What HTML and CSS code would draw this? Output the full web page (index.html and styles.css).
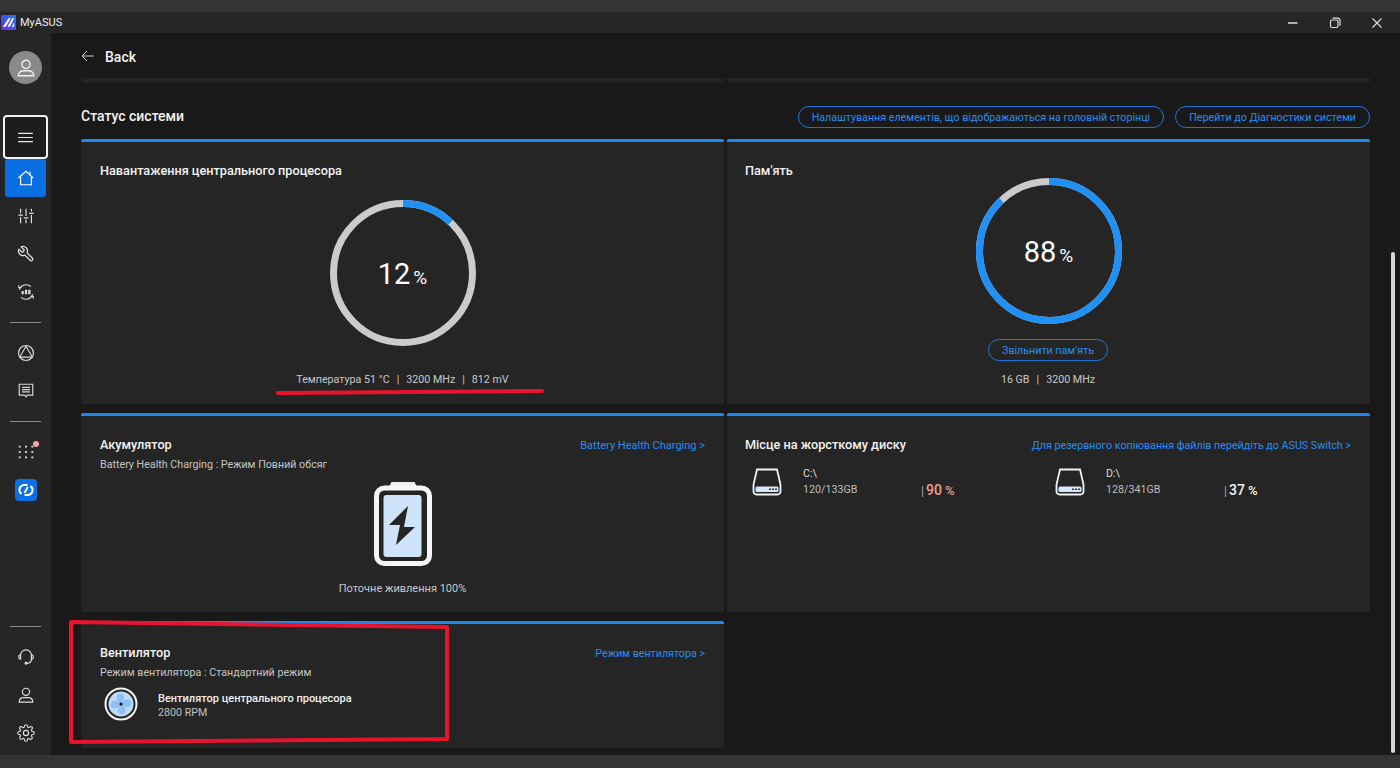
FILE: index.html
```html
<!DOCTYPE html>
<html lang="uk">

<head>
    <meta charset="utf-8">
    <title>MyASUS</title>
    <link rel="stylesheet" href="styles.css">
</head>

<body>
    <div class="strip-top"></div>
    <div class="titlebar">
        <div class="app-name">
            <svg class="app-logo" viewBox="0 0 16 16">
                <defs>
                    <linearGradient id="logo-grad" x1="0" y1="1" x2="1" y2="0">
                        <stop offset="0" stop-color="#6a2be0"/>
                        <stop offset="1" stop-color="#1e7cf0"/>
                    </linearGradient>
                </defs>
                <rect width="16" height="16" rx="1" fill="url(#logo-grad)"/>
                <path d="M2 12.500 8 3.500h2.500l-5.500 9zM7 12.500 12 3.500h2l-4.500 9zM11.500 12.500l2.500-4.500v4.500z" fill="#fff"/>
            </svg>
            MyASUS
        </div>
        <div class="win-btns">
            <svg viewBox="0 0 12 12"><path d="M1 6h9.500" stroke="#ddd" stroke-width="1.500"/></svg>
            <svg viewBox="0 0 12 12" fill="none" stroke="#ddd" stroke-width="1.200"><rect x="1.500" y="3" width="7.500" height="7.500" rx="1.500"/><path d="M3.500 1.200h5a2.500 2.500 0 0 1 2.500 2.500v5"/></svg>
            <svg viewBox="0 0 12 12"><path d="M1.500 1.500l9 9M10.500 1.500l-9 9" stroke="#ddd" stroke-width="1.100"/></svg>
        </div>
    </div>

    <div class="main">
        <div class="sidebar">
            <div class="avatar">
                <svg viewBox="0 0 24 24" fill="none" stroke="#f2f2f2" stroke-width="1.500"><circle cx="12" cy="8" r="4.500"/><path d="M3.500 20.500c0-3.500 3-5.500 5.500-5.500h6c2.500 0 5.500 2 5.500 5.500z"/></svg>
            </div>
            <div class="side-menu">
                <svg viewBox="0 0 16 12" stroke="#e6e6e6" stroke-width="1.300"><path d="M0 1.500h16M0 6h16M0 10.500h16"/></svg>
            </div>
            <div class="side-home">
                <svg viewBox="0 0 20 20" fill="none" stroke="#fff" stroke-width="1.300"><path d="M1.500 10 10 2.500l8 7.500M4 8v9.500h12V8M14.500 3v3"/></svg>
            </div>
            <div class="side-item">
                <svg viewBox="0 0 20 20" fill="none" stroke="#e0e0e0" stroke-width="1.300"><path d="M4 2v5M1.500 9h5M4 11v7M10 2v8M7.500 12h5M10 14v4M16 2v3M13.500 7h5M16 9v9"/></svg>
            </div>
            <div class="side-item">
                <svg viewBox="0 0 24 24" fill="none" stroke="#e0e0e0" stroke-width="1.700" stroke-linejoin="round"><path transform="translate(24 0) scale(-1 1)" d="M14.700 6.300a1 1 0 0 0 0 1.400l1.600 1.600a1 1 0 0 0 1.400 0l3.770-3.770a6 6 0 0 1-7.940 7.940l-6.910 6.910a2.120 2.120 0 0 1-3-3l6.910-6.910a6 6 0 0 1 7.940-7.940l-3.760 3.760z"/></svg>
            </div>
            <div class="side-item">
                <svg viewBox="0 0 20 20" fill="none" stroke="#e0e0e0" stroke-width="1.200"><path d="M2.500 7.500A8 8 0 0 1 15.500 4M17.500 12.500A8 8 0 0 1 4.500 16M2 2.500V5h3M18 17.500V15h-3"/><rect x="5" y="9" width="2.500" height="3.500" fill="#e0e0e0" stroke="none"/><rect x="8.800" y="7.500" width="2.500" height="5" fill="#e0e0e0" stroke="none"/><rect x="12.500" y="7.500" width="2.500" height="5" fill="#e0e0e0" stroke="none"/></svg>
            </div>
            <div class="side-line"></div>
            <div class="side-item">
                <svg viewBox="0 0 20 20" fill="none" stroke="#d8d8d8" stroke-width="1.300"><circle cx="10" cy="10" r="8.300"/><path d="M10 2.500 3 14.500h14z"/></svg>
            </div>
            <div class="side-item">
                <svg viewBox="0 0 20 20" fill="none" stroke="#d8d8d8" stroke-width="1.300"><path d="M2.500 2.500h15v12h-6l-1.500 2-1.500-2h-6z"/><path d="M5.500 6h9M5.500 8.500h9M5.500 11h9"/></svg>
            </div>
            <div class="side-line"></div>
            <div class="side-item side-apps">
                <svg viewBox="0 0 20 20" fill="#e8e8e8"><rect x="2" y="3" width="2" height="2"/><rect x="9" y="3" width="2" height="2"/><rect x="16" y="3" width="2" height="2"/><rect x="2" y="9" width="2" height="2"/><rect x="9" y="9" width="2" height="2"/><rect x="16" y="9" width="2" height="2"/><rect x="2" y="15" width="2" height="2"/><rect x="9" y="15" width="2" height="2"/><rect x="16" y="15" width="2" height="2"/></svg>
                <span class="apps-dot"></span>
            </div>
            <div class="side-item side-switch">
                <svg viewBox="0 0 22 22"><rect width="22" height="22" rx="4" fill="#0b6fe6"/><path d="M12.500 6H9a5 5 0 0 0-2.500 9M9.500 16H13a5 5 0 0 0 2.500-9M12.800 8 9.500 14" fill="none" stroke="#fff" stroke-width="2"/></svg>
            </div>

            <div class="side-bottom">
                <div class="side-line"></div>
                <div class="side-item">
                    <svg viewBox="0 0 20 20" fill="none" stroke="#e0e0e0" stroke-width="1.300"><path d="M4 8a6 6 0 0 1 12 0M4 7.500a2 2 0 0 0-2 2v1a2 2 0 0 0 2 2zM16 7.500a2 2 0 0 1 2 2v1a2 2 0 0 1-2 2zM16 12.500c0 3-2 4.500-5 4.500"/><circle cx="10" cy="17" r="1" fill="#e0e0e0"/></svg>
                </div>
                <div class="side-item">
                    <svg viewBox="0 0 20 20" fill="none" stroke="#e0e0e0" stroke-width="1.300"><circle cx="10" cy="6.500" r="4"/><path d="M2.500 18c0-3.500 2.500-5 5-5h5c2.500 0 5 1.500 5 5z"/></svg>
                </div>
                <div class="side-item">
                    <svg viewBox="0 0 24 24" fill="none" stroke="#e0e0e0" stroke-width="1.500"><circle cx="12" cy="12" r="3.500"/><path d="M19.400 15a1.700 1.700 0 0 0 .3 1.800l.1.100a2 2 0 1 1-2.900 2.900l-.1-.1a1.700 1.700 0 0 0-2.800 1.200V21a2 2 0 1 1-4 0v-.1a1.700 1.700 0 0 0-2.900-1.200l-.1.100a2 2 0 1 1-2.800-2.900l.1-.1a1.700 1.700 0 0 0-1.200-2.800H3a2 2 0 1 1 0-4h.1a1.700 1.700 0 0 0 1.200-2.900l-.1-.1A2 2 0 1 1 7 4.200l.1.1a1.700 1.700 0 0 0 1.900.3 1.700 1.700 0 0 0 1-1.500V3a2 2 0 1 1 4 0v.1a1.700 1.700 0 0 0 2.900 1.200l.1-.1a2 2 0 1 1 2.800 2.800l-.1.100a1.700 1.700 0 0 0 1.200 2.900h.1a2 2 0 1 1 0 4h-.1a1.700 1.700 0 0 0-1.500 1z"/></svg>
                </div>
            </div>
        </div>

        <div class="content">
            <div class="back-row">
                <svg viewBox="0 0 14 12" fill="none" stroke="#cfcfcf" stroke-width="1"><path d="M13 6H1M6 1 1 6l5 5"/></svg>
                <span>Back</span>
            </div>
            <div class="prev-row">
                <div></div>
                <div></div>
            </div>

            <div class="section-head">
                <h2>Статус системи</h2>
                <div class="section-btns">
                    <a class="pill">Налаштування елементів, що відображаються на головній сторінці</a>
                    <a class="pill">Перейти до Діагностики системи</a>
                </div>
            </div>

            <div class="cards">
                <div class="card card-ring">
                    <div class="card-title">Навантаження центрального процесора</div>
                    <div class="ring ring-cpu">
                        <svg viewBox="0 0 146 146">
                            <circle class="ring-bg" cx="73" cy="73" r="69.500"/>
                            <circle class="ring-val" cx="73" cy="73" r="69.500" pathLength="100" stroke-dasharray="12 88" transform="rotate(-90 73 73)"/>
                        </svg>
                        <div class="ring-text">12<small>%</small></div>
                    </div>
                    <div class="ring-info">Температура 51 °C<i>|</i>3200 MHz<i>|</i>812 mV</div>
                </div>

                <div class="card card-ring">
                    <div class="card-title">Пам'ять</div>
                    <div class="ring ring-mem">
                        <svg viewBox="0 0 146 146">
                            <circle class="ring-bg" cx="73" cy="73" r="69.500"/>
                            <circle class="ring-val" cx="73" cy="73" r="69.500" pathLength="100" stroke-dasharray="88 12" transform="rotate(-90 73 73)"/>
                        </svg>
                        <div class="ring-text">88<small>%</small></div>
                    </div>
                    <a class="pill pill-free">Звільнити пам'ять</a>
                    <div class="ring-info">16 GB<i>|</i>3200 MHz</div>
                </div>

                <div class="card">
                    <div class="card-head">
                        <div class="card-title">Акумулятор</div>
                        <a class="card-link card-link-en">Battery Health Charging &gt;</a>
                    </div>
                    <div class="card-sub">Battery Health Charging : Режим Повний обсяг</div>
                    <div class="battery">
                        <svg viewBox="0 0 58 85">
                            <path d="M15 6 17.500 1h23L43 6z" fill="#efefef"/>
                            <rect x="2.500" y="7" width="53" height="75.500" rx="8" fill="#252525" stroke="#f5f5f5" stroke-width="5"/>
                            <rect x="9.500" y="14" width="38" height="62" rx="3" fill="#cfe4fb"/>
                            <path d="M34 25 15 44h11l-4 20 19-18H30z" fill="#252525"/>
                        </svg>
                        <span>Поточне живлення 100%</span>
                    </div>
                </div>

                <div class="card">
                    <div class="card-head">
                        <div class="card-title">Місце на жорсткому диску</div>
                        <a class="card-link">Для резервного копіювання файлів перейдіть до ASUS Switch &gt;</a>
                    </div>
                    <div class="disks">
                        <div class="disk">
                            <svg class="disk-icon" viewBox="0 0 30 28">
                                <path d="M5 1.500h20l3.500 15v7a3 3 0 0 1-3 3h-21a3 3 0 0 1-3-3v-7z" fill="none" stroke="#f2f2f2" stroke-width="1.800"/>
                                <rect x="3.500" y="18.500" width="23" height="5.500" rx="1.500" fill="#d3e6fb"/>
                                <path d="M17 21.200h8" stroke="#333" stroke-width="1.500" stroke-dasharray="2 1"/>
                            </svg>
                            <div class="disk-name">C:\<br><span>120/133GB</span></div>
                            <div class="disk-pct disk-warn"><i>|</i><b>90</b> %</div>
                        </div>
                        <div class="disk">
                            <svg class="disk-icon" viewBox="0 0 30 28">
                                <path d="M5 1.500h20l3.500 15v7a3 3 0 0 1-3 3h-21a3 3 0 0 1-3-3v-7z" fill="none" stroke="#f2f2f2" stroke-width="1.800"/>
                                <rect x="3.500" y="18.500" width="23" height="5.500" rx="1.500" fill="#d3e6fb"/>
                                <path d="M17 21.200h8" stroke="#333" stroke-width="1.500" stroke-dasharray="2 1"/>
                            </svg>
                            <div class="disk-name">D:\<br><span>128/341GB</span></div>
                            <div class="disk-pct"><i>|</i><b>37</b> %</div>
                        </div>
                    </div>
                </div>

                <div class="card">
                    <div class="card-head">
                        <div class="card-title">Вентилятор</div>
                        <a class="card-link">Режим вентилятора &gt;</a>
                    </div>
                    <div class="card-sub">Режим вентилятора : Стандартний режим</div>
                    <div class="fan">
                        <svg viewBox="0 0 34 34">
                            <circle cx="17" cy="17" r="15.500" fill="#252525" stroke="#f5f5f5" stroke-width="2"/>
                            <circle cx="17" cy="17" r="12.500" fill="#bcdcfa"/>
                            <path d="M17 17c-4-2-6-6-3-10 4-1 7 1 6 5zM17 17c2-4 6-6 10-3 1 4-1 7-5 6zM17 17c4 2 6 6 3 10-4 1-7-1-6-5zM17 17c-2 4-6 6-10 3-1-4 1-7 5-6z" fill="#8cc0f6"/>
                            <circle cx="17" cy="17" r="1.600" fill="#111"/>
                        </svg>
                        <div class="fan-text">
                            <div class="fan-name">Вентилятор центрального процесора</div>
                            <div class="fan-rpm">2800 RPM</div>
                        </div>
                    </div>
                </div>
            </div>
        </div>
    </div>
    <div class="strip-bottom"></div>

    <!-- scrollbar and the red marks drawn over the screenshot -->
    <div class="scroll-thumb"></div>
    <svg class="marks" viewBox="0 0 1400 768" fill="none" stroke="#e8142e">
        <path d="M278 393 Q410 392 542 391" stroke-width="4" stroke-linecap="round"/>
        <path d="M71 622 447 627 447 739 71 742z" stroke-width="4" stroke-linejoin="round"/>
    </svg>
</body>

</html>
```

FILE: styles.css
```css
* {
    margin: 0;
    padding: 0;
    box-sizing: border-box;
}

body {
    width: 1400px;
    height: 768px;
    overflow: hidden;
    display: flex;
    flex-direction: column;
    background: #191919;
    color: #f2f2f2;
    font-family: Roboto, "Noto Sans", sans-serif;
    font-size: 10.700px;
}

svg {
    display: block;
}

.strip-top {
    height: 12px;
    background: #343434;
}

.strip-bottom {
    height: 13px;
    background: #343434;
}

.titlebar {
    height: 21px;
    display: flex;
    justify-content: space-between;
    align-items: center;
    background: #262626;
}

.app-name {
    display: flex;
    align-items: center;
    gap: 4px;
    padding-left: 1px;
    font-size: 11px;
    color: #eee;
}

.app-logo {
    width: 15px;
    height: 15px;
}

.win-btns {
    display: flex;
    gap: 30px;
    padding-right: 17px;
}

.win-btns svg {
    width: 12px;
    height: 12px;
}

.main {
    flex: 1;
    display: flex;
    min-height: 0;
}

/* left bar */
.sidebar {
    width: 51px;
    display: flex;
    flex-direction: column;
    align-items: center;
    background: #262626;
    padding-top: 18px;
}

.avatar {
    width: 33px;
    height: 33px;
    border-radius: 50%;
    background: #8a8a8a;
    display: flex;
    align-items: center;
    justify-content: center;
    margin-bottom: 31px;
}

.avatar svg {
    width: 22px;
    height: 22px;
}

.side-menu {
    width: 45px;
    height: 44px;
    border: 2px solid #f2f2f2;
    border-radius: 4px;
    background: #1d1d1d;
    display: flex;
    align-items: center;
    justify-content: center;
}

.side-menu svg {
    width: 15px;
    height: 11px;
}

.side-home {
    width: 41px;
    height: 38px;
    border-radius: 3px;
    background: #0a6fe3;
    display: flex;
    align-items: center;
    justify-content: center;
}

.side-home svg {
    width: 18px;
    height: 18px;
}

.side-item {
    width: 41px;
    height: 38px;
    display: flex;
    align-items: center;
    justify-content: center;
    flex-shrink: 0;
}

.side-item svg {
    width: 18px;
    height: 18px;
}

.side-item.side-switch svg {
    width: 22px;
    height: 22px;
}

.side-line {
    width: 31px;
    height: 1px;
    background: #8c8c8c;
    margin: 11px 0;
    flex-shrink: 0;
}

.side-apps {
    position: relative;
}

.apps-dot {
    position: absolute;
    top: 8px;
    right: 7px;
    width: 6px;
    height: 6px;
    border-radius: 50%;
    background: #f4a5a5;
}

.side-bottom {
    margin-top: auto;
    display: flex;
    flex-direction: column;
    align-items: center;
    padding-bottom: 3px;
}

/* main area */
.content {
    flex: 1;
    padding: 0 30px;
    min-width: 0;
}

.back-row {
    height: 45px;
    display: flex;
    align-items: center;
    gap: 10px;
    padding-top: 3px;
    font-size: 14px;
    font-weight: 500;
}

.back-row svg {
    width: 14px;
    height: 12px;
    margin-bottom: 3px;
}

.prev-row {
    display: grid;
    grid-template-columns: 643px 643px;
    gap: 3px;
    height: 5px;
}

.prev-row div {
    background: #232323;
    border-radius: 0 0 3px 3px;
}

.section-head {
    height: 56px;
    display: flex;
    justify-content: space-between;
    align-items: center;
    padding-top: 11px;
}

.section-head h2 {
    font-size: 14px;
    font-weight: 500;
    margin-bottom: 2px;
}

.section-btns {
    display: flex;
    gap: 11px;
    align-items: center;
}

.pill {
    display: block;
    height: 22px;
    line-height: 21px;
    padding: 0 13px;
    border: 1px solid #1f73d6;
    border-radius: 11px;
    color: #2b8cf0;
    font-size: 10.700px;
    white-space: nowrap;
}

.cards {
    display: grid;
    grid-template-columns: 643px 643px;
    grid-template-rows: 265px 199px 127px;
    column-gap: 3px;
    row-gap: 9px;
}

.card {
    background: #252525;
    border-top: 3px solid #1e88f0;
    border-radius: 2px;
    padding: 20px 19px 0;
    display: flex;
    flex-direction: column;
}

.card:nth-child(even) {
    padding-left: 18px;
}

.card-title {
    font-size: 12.700px;
    font-weight: 500;
    line-height: 18px;
}

.card-head {
    display: flex;
    justify-content: space-between;
    align-items: center;
}

.card-link {
    color: #2b8cf0;
    font-size: 10.700px;
}

.card-link-en {
    font-size: 11px;
}

.card-sub {
    color: #c4c4c4;
    font-size: 10.700px;
    line-height: 16px;
    margin-top: 3px;
}

/* rings */
.card-ring {
    align-items: stretch;
}

.ring {
    display: grid;
    width: 146px;
    height: 146px;
    align-self: center;
}

.ring > * {
    grid-area: 1 / 1;
}

.ring-cpu {
    margin-top: 20px;
}

.ring-mem {
    margin-top: -2px;
    margin-left: 1px;
}

.ring-bg {
    fill: none;
    stroke: #cbcbcb;
    stroke-width: 7;
}

.ring-val {
    fill: none;
    stroke: #2190f5;
    stroke-width: 7;
}

.ring-text {
    align-self: center;
    justify-self: center;
    padding-top: 2px;
    font-size: 29px;
    font-weight: 400;
    color: #fff;
}

.ring-text small {
    font-size: 19px;
    margin-left: 3px;
}

.ring-info {
    margin-top: auto;
    margin-bottom: 16px;
    text-align: center;
    color: #c8c8c8;
    font-size: 10.700px;
    line-height: 16px;
}

.ring-info i {
    font-style: normal;
    margin: 0 7px;
}

.pill-free {
    align-self: center;
    margin-top: 15px;
    width: 120px;
    padding: 0;
    text-align: center;
    color: #2b8cf0;
}

/* battery */
.battery {
    display: flex;
    flex-direction: column;
    align-items: center;
    margin-top: 8px;
    color: #c8c8c8;
    font-size: 11px;
}

.battery svg {
    width: 58px;
    height: 85px;
    margin-bottom: 16px;
}

/* disks */
.disks {
    display: flex;
    margin-top: 12px;
    padding-left: 7px;
}

.disk {
    flex: none;
    width: 303px;
    display: flex;
    align-items: center;
    font-size: 10.700px;
}

.disk-icon {
    width: 30px;
    height: 28px;
    margin-right: 21px;
}

.disk-name {
    width: 118px;
    line-height: 16px;
    color: #dcdcdc;
}

.disk-name span {
    color: #bdbdbd;
}

.disk-pct {
    font-size: 13px;
    font-weight: 500;
    padding-top: 16px;
}

.disk-pct i {
    font-style: normal;
    font-weight: 400;
    font-size: 12px;
    color: #aaa;
    margin-right: 2px;
}

.disk-pct b {
    font-size: 14px;
    font-weight: 500;
}

.disk-warn {
    color: #ee9d8e;
}

/* fan */
.fan {
    display: flex;
    align-items: center;
    gap: 20px;
    margin-top: 6px;
    padding-left: 4px;
}

.fan svg {
    width: 34px;
    height: 34px;
}

.fan-text {
    padding-top: 4px;
}

.fan-name {
    font-size: 11px;
    font-weight: 500;
    line-height: 14px;
}

.fan-rpm {
    color: #c0c0c0;
    font-size: 10.700px;
    line-height: 14px;
}

/* overlays */
.scroll-thumb {
    position: absolute;
    left: 1391px;
    top: 252px;
    width: 4px;
    height: 501px;
    border-radius: 2px;
    background: #d4d4d4;
}

.marks {
    position: absolute;
    left: 0;
    top: 0;
    width: 1400px;
    height: 768px;
}
```
